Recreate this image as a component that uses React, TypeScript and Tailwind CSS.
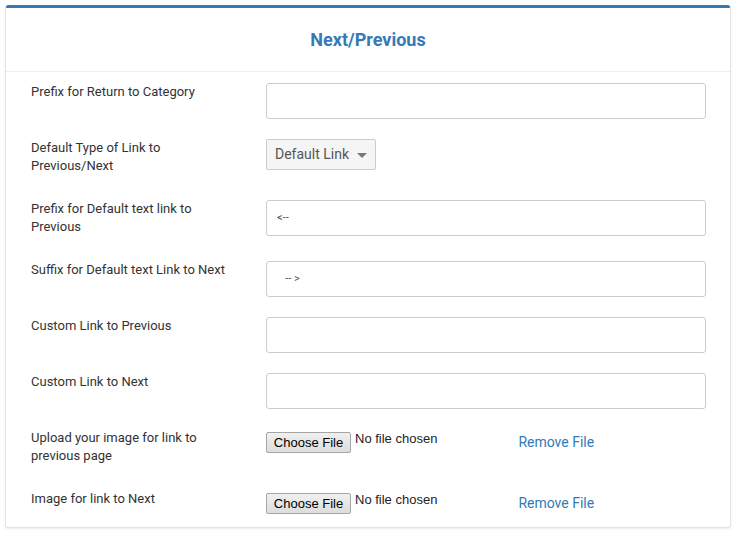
const rows: { label: string; kind: "text" | "select" | "file"; value?: string }[] = [
  { label: "Prefix for Return to Category", kind: "text" },
  { label: "Default Type of Link to Previous/Next", kind: "select" },
  { label: "Prefix for Default text link to Previous", kind: "text", value: "<--" },
  { label: "Suffix for Default text Link to Next", kind: "text", value: "   -- >" },
  { label: "Custom Link to Previous", kind: "text" },
  { label: "Custom Link to Next", kind: "text" },
  { label: "Upload your image for link to previous page", kind: "file" },
  { label: "Image for link to Next", kind: "file" },
];

function Field({ row }: { row: (typeof rows)[number] }) {
  if (row.kind === "select") {
    return (
      <div className="flex h-[31px] w-[110px] items-center justify-between rounded-[2px] border border-[#cccccc] bg-[#f5f5f5] pl-[8px] pr-[8px] text-[14px] text-[#555555]">
        <span>Default Link</span>
        <span className="mt-[2px] h-0 w-0 border-x-[5px] border-t-[5px] border-x-transparent border-t-[#777777]" />
      </div>
    );
  }
  if (row.kind === "file") {
    return (
      <div className="mt-[3px] flex items-start font-['Liberation_Sans',Arial,sans-serif] text-[13px] text-[#222222]">
        <button className="h-[21px] w-[85px] rounded-[2px] border border-[#a6a6a6] bg-gradient-to-b from-[#f0f0f0] to-[#dddddd] text-[13px] leading-[19px] text-black">
          Choose File
        </button>
        <span className="ml-[4px] -mt-[1px] leading-[16px]">No file chosen</span>
        <a className="ml-[81px] mt-[1px] font-['Roboto',sans-serif] text-[14px] leading-[18px] text-[#337ab7]">Remove File</a>
      </div>
    );
  }
  return (
    <div className="flex h-[36px] w-[440px] items-center whitespace-pre rounded-[3px] border border-[#cccccc] bg-white px-[10px] text-[11px] text-[#555555]">
      {row.value ?? ""}
    </div>
  );
}

export default function App() {
  return (
    <div className="min-h-[537px] bg-white pl-[5px] pr-[3px] pt-[5px] font-['Roboto',sans-serif]">
      <div className="overflow-hidden rounded-[3px] border-x border-b border-[#e3e3e3] bg-white shadow-[0_1px_2px_rgba(0,0,0,0.08)]">
        <div className="h-[3px] bg-[#337ab7]" />
        <div className="flex h-[64px] items-center justify-center border-b border-[#eeeeee] text-[18px] font-bold text-[#337ab7]">
          Next/Previous
        </div>
        <div className="pb-[13px] pl-[25px] pt-[11px]">
          {rows.map((row, idx) => (
            <div key={`row-${idx}`} className="mb-[20px] flex items-start last:mb-0">
              <div className="w-[235px] pb-[5px] pr-[40px] text-[13px] leading-[18px] text-[#333333]">{row.label}</div>
              <Field row={row} />
            </div>
          ))}
        </div>
      </div>
    </div>
  );
}
